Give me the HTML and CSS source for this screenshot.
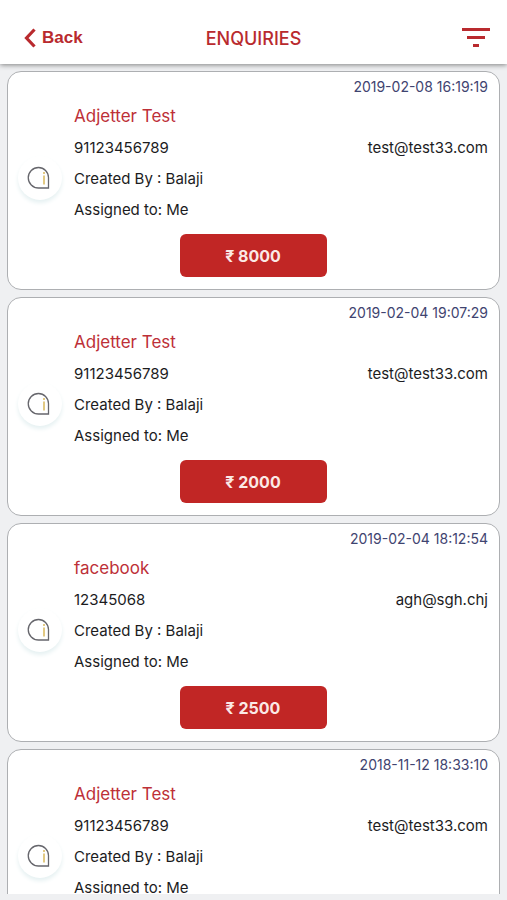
FILE: index.html
```html
<!DOCTYPE html>
<html lang="en">
<head>
<meta charset="utf-8">
<meta name="viewport" content="width=device-width, initial-scale=1">
<title>Enquiries</title>
<link rel="stylesheet" href="styles.css">
</head>
<body>
<svg class="sprite" aria-hidden="true">
  <symbol id="drop" viewBox="0 0 24 24">
    <path d="M11.500 1.500A10 10 0 0 0 11.500 22H21.500V11.500A10 10 0 0 0 11.500 1.500Z" fill="#fff" stroke="#66666c" stroke-width="1.300"/>
    <path d="M17 9.500v9M17 6v2" fill="none" stroke="#e2c983" stroke-width="2"/>
  </symbol>
</svg>
<header class="bar">
  <a class="back" href="#">
    <svg class="chevron" viewBox="0 0 12 20" aria-hidden="true"><path d="M10.500 1.500L2.500 10L10.500 18.500" fill="none" stroke="currentColor" stroke-width="3.200"/></svg>
    Back
  </a>
  <h1 class="title">Enquiries</h1>
  <button class="filter" type="button" aria-label="Filter">
    <svg class="lines" viewBox="0 0 28 20" aria-hidden="true"><path d="M0 1.500H28M5 9.500H23M11 17.500H17" fill="none" stroke="currentColor" stroke-width="3"/></svg>
  </button>
</header>
<main class="list">
  <article class="card">
    <time class="time">2019-02-08 16:19:19</time>
    <div class="info">
      <div class="avatar"><svg class="mark" aria-hidden="true"><use href="#drop"/></svg></div>
      <div class="details">
        <h2 class="name">Adjetter Test</h2>
        <p class="row"><span>91123456789</span><span>test@test33.com</span></p>
        <p class="row">Created By : Balaji</p>
        <p class="row">Assigned to: Me</p>
      </div>
    </div>
    <button class="amount" type="button">₹ 8000</button>
  </article>
  <article class="card">
    <time class="time">2019-02-04 19:07:29</time>
    <div class="info">
      <div class="avatar"><svg class="mark" aria-hidden="true"><use href="#drop"/></svg></div>
      <div class="details">
        <h2 class="name">Adjetter Test</h2>
        <p class="row"><span>91123456789</span><span>test@test33.com</span></p>
        <p class="row">Created By : Balaji</p>
        <p class="row">Assigned to: Me</p>
      </div>
    </div>
    <button class="amount" type="button">₹ 2000</button>
  </article>
  <article class="card">
    <time class="time">2019-02-04 18:12:54</time>
    <div class="info">
      <div class="avatar"><svg class="mark" aria-hidden="true"><use href="#drop"/></svg></div>
      <div class="details">
        <h2 class="name">facebook</h2>
        <p class="row"><span>12345068</span><span>agh@sgh.chj</span></p>
        <p class="row">Created By : Balaji</p>
        <p class="row">Assigned to: Me</p>
      </div>
    </div>
    <button class="amount" type="button">₹ 2500</button>
  </article>
  <article class="card">
    <time class="time">2018-11-12 18:33:10</time>
    <div class="info">
      <div class="avatar"><svg class="mark" aria-hidden="true"><use href="#drop"/></svg></div>
      <div class="details">
        <h2 class="name">Adjetter Test</h2>
        <p class="row"><span>91123456789</span><span>test@test33.com</span></p>
        <p class="row">Created By : Balaji</p>
        <p class="row">Assigned to: Me</p>
      </div>
    </div>
  </article>
</main>
</body>
</html>
```
FILE: styles.css
```css
* {
  box-sizing: border-box;
}

body {
  display: flex;
  flex-direction: column;
  height: 100vh;
  margin: 0;
  padding-bottom: 6px;
  background: #eff0f2;
  color: #1c1c1e;
  font-family: Inter, "Liberation Sans", sans-serif;
  font-size: 15px;
}

.sprite {
  position: absolute;
  width: 0;
  height: 0;
}

h1, h2, p {
  margin: 0;
}

.bar {
  position: relative;
  display: grid;
  grid-template-columns: 1fr auto 1fr;
  align-items: center;
  flex: none;
  height: 64px;
  padding: 12px 17px 0;
  background: #fff;
  box-shadow: 0 1px 5px #0007;
  color: #b92a2e;
}

.back {
  display: flex;
  align-items: center;
  gap: 6px;
  padding-left: 7px;
  color: inherit;
  font: bold 17px "Liberation Sans", sans-serif;
  text-decoration: none;
}

.chevron {
  width: 12px;
  height: 20px;
}

.title {
  font-size: 18px;
  font-weight: 500;
  text-transform: uppercase;
}

.filter {
  justify-self: end;
  padding: 0;
  border: 0;
  background: none;
  color: inherit;
}

.lines {
  display: block;
  width: 28px;
  height: 20px;
}

.list {
  display: flex;
  flex: 1;
  flex-direction: column;
  gap: 7px;
  min-height: 0;
  padding: 7px 7px 0;
  overflow: hidden;
}

.card {
  display: flex;
  flex: none;
  flex-direction: column;
  padding: 0 11px 12px 10px;
  border: 1px solid #adafb2;
  border-radius: 14px;
  background: #fff;
}

.time {
  align-self: flex-end;
  color: #3f4470;
  font-size: 14px;
  line-height: 29px;
}

.info {
  display: flex;
  align-items: center;
  gap: 12px;
}

.avatar {
  display: flex;
  flex: none;
  align-items: center;
  width: 44px;
  height: 44px;
  margin-top: 30px;
  padding-left: 9px;
  border-radius: 50%;
  background: #fff;
  box-shadow: 0 3px 4px #e6f1f2;
}

.mark {
  width: 24px;
  height: 24px;
}

.details {
  flex: 1;
  line-height: 31px;
}

.name {
  color: #bd3038;
  font-size: 17px;
  font-weight: 400;
}

.row {
  display: flex;
  justify-content: space-between;
}

.amount {
  align-self: center;
  width: 147px;
  height: 43px;
  margin-top: 9px;
  border: 0;
  border-radius: 6px;
  background: #c12625;
  color: #fbe9e6;
  font: 700 16px Inter, "Liberation Sans", sans-serif;
}
```
